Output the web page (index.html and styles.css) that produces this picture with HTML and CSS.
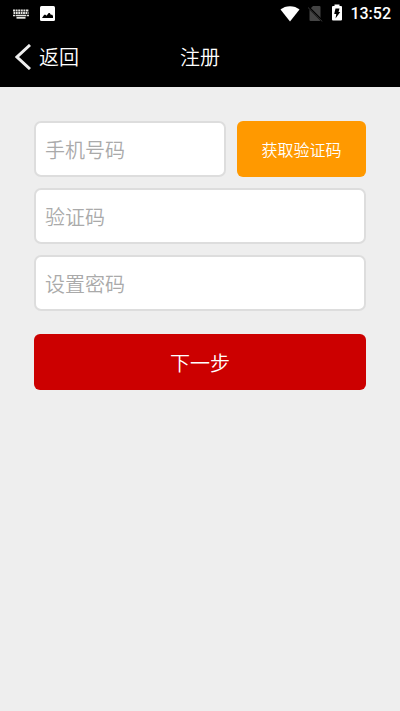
FILE: index.html
```html
<!DOCTYPE html>
<html lang="zh-CN">
<head>
    <meta charset="UTF-8">
    <meta name="viewport" content="width=device-width, initial-scale=1">
    <title>注册</title>
    <link rel="stylesheet" href="styles.css">
</head>
<body>

    <div class="status-bar">
        <div class="status-left">
            <!-- keyboard -->
            <svg width="16" height="10" viewBox="0 0 16 10" fill="none" stroke="#e4e4e0">
                <path d="M0 1.5h16" stroke-width="1.8" stroke-dasharray="2 .6"/>
                <path d="M.5 4h15" stroke-width="1.8" stroke-dasharray="1.8 .6"/>
                <path d="M0 6.5h2.4M3 6.5h10M13.6 6.5h2.4" stroke-width="1.6"/>
                <path d="M3.500 8.800h9" stroke-width="1.800"/>
            </svg>
            <!-- picture -->
            <svg width="15" height="15" viewBox="0 0 15 15">
                <rect width="15" height="15" rx="1.5" fill="#fff"/>
                <path d="M2 12l2.200-3.300h1.300l1 1L8.700 7h1l1.300 2 1-.5 1 1.500v2z" fill="#000"/>
            </svg>
        </div>
        <div class="status-right">
            <!-- wifi -->
            <svg width="20" height="16" viewBox="0 0 20 16">
                <path d="M.5 3.6C3 1.5 6.3.3 10 .3s7 1.2 9.5 3.3L10 15.6z" fill="#fff"/>
            </svg>
            <!-- no sim -->
            <svg width="16" height="16" viewBox="0 0 16 16">
                <path d="M5 0h6.500q1 0 1 1v13q0 1-1 1h-9q-1 0-1-1V3.500z" fill="#444"/>
                <path d="M0 .8l14.800 14.700" stroke="#000" stroke-width="2.200"/>
                <path d="M0 1.500l14.300 14" stroke="#444" stroke-width=".8"/>
            </svg>
            <!-- battery -->
            <svg width="10" height="20" viewBox="0 0 10 20">
                <path d="M2.500.5h5V2H9q1 0 1 1v12.500q0 1-1 1H1q-1 0-1-1V3q0-1 1-1h1.500z" fill="#fff"/>
                <path d="M3.500 4.500h4L6.500 8h1.700L3.500 14.500l.8-4.500H2.200z" fill="#000"/>
            </svg>
            <span class="time">13:52</span>
        </div>
    </div>

    <header class="title-bar">
        <a class="back" href="#">
            <svg width="16" height="26" viewBox="0 0 16 26" fill="none" stroke="#eee" stroke-width="3">
                <path d="M15 1L2 13l13 12"/>
            </svg>
            返回
        </a>
        <h1>注册</h1>
    </header>

    <form class="register">
        <div class="row">
            <input class="field" type="tel" placeholder="手机号码" aria-label="手机号码">
            <button class="btn-code" type="button">获取验证码</button>
        </div>
        <input class="field" type="text" placeholder="验证码" aria-label="验证码">
        <input class="field" type="password" placeholder="设置密码" aria-label="设置密码">
        <button class="btn-next" type="submit">下一步</button>
    </form>

</body>
</html>
```
FILE: styles.css
```css
* {
    box-sizing: border-box;
}

body {
    margin: 0;
    background: #eee;
    font-family: "Noto Sans CJK SC", sans-serif;
    font-weight: 350;
    color: #fff;
}

svg {
    display: block;
}

.status-bar {
    display: flex;
    justify-content: space-between;
    align-items: center;
    height: 27px;
    padding: 0 9px 0 13px;
    background: #000;
}

.status-left {
    display: flex;
    align-items: center;
    gap: 11px;
}

.status-right {
    display: flex;
    align-items: center;
    gap: 8px;
}

.time {
    font-family: Roboto, sans-serif;
    font-size: 16px;
    font-weight: 500;
    line-height: 27px;
}

.title-bar {
    display: grid;
    grid-template-columns: 1fr auto 1fr;
    align-items: center;
    height: 60px;
    padding: 0 15px;
    background: #000;
}

.back {
    display: flex;
    align-items: center;
    gap: 8px;
    font-size: 20px;
    line-height: 28px;
    color: #fff;
    text-decoration: none;
}

.title-bar h1 {
    margin: 0;
    font-size: 20px;
    font-weight: inherit;
    line-height: 28px;
}

.register {
    display: flex;
    flex-direction: column;
    gap: 11px;
    padding: 34px;
}

.row {
    display: grid;
    grid-template-columns: 1fr 129px;
    gap: 11px;
}

.field {
    width: 100%;
    height: 56px;
    padding: 0 9px;
    border: 2px solid #ddd;
    border-radius: 7px;
    background: #fff;
    font-family: inherit;
    font-size: 20px;
    font-weight: inherit;
    color: #333;
}

.field::placeholder {
    color: #aaa;
    opacity: 1;
}

.btn-code,
.btn-next {
    height: 56px;
    border: none;
    border-radius: 6px;
    font-family: inherit;
    font-weight: inherit;
    color: #fff;
    cursor: pointer;
}

.btn-code {
    background: #f90;
    font-size: 16px;
}

.btn-next {
    margin-top: 12px;
    background: #c00;
    font-size: 20px;
}
```
